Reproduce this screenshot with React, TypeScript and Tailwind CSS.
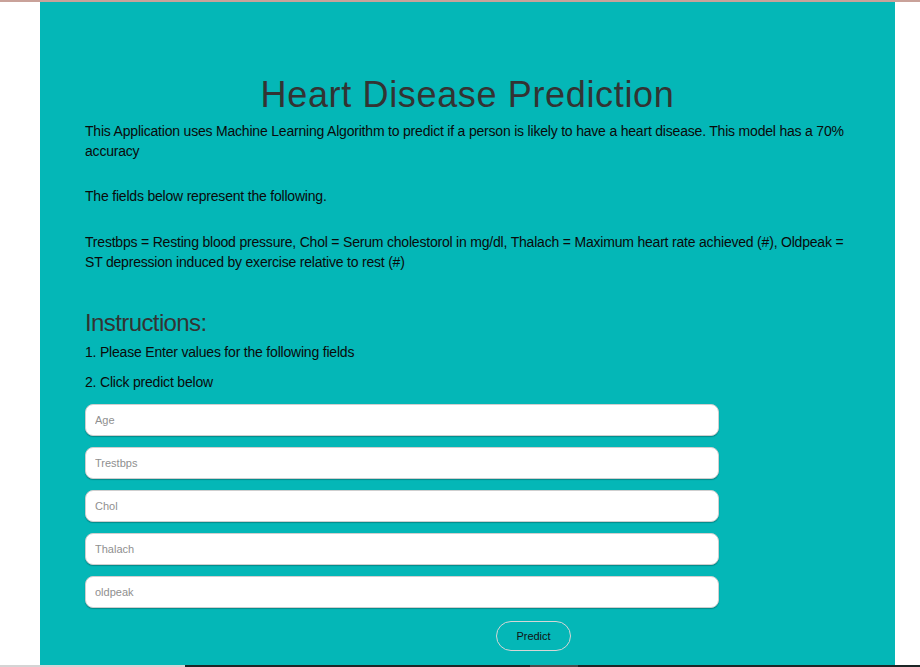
import React from "react";

const fields = ["Age", "Trestbps", "Chol", "Thalach", "oldpeak"];

export default function App() {
  return (
    <div
      className="flex h-[667px] w-[920px] flex-col overflow-hidden bg-white"
      style={{ fontFamily: '"Liberation Sans", Arial, sans-serif' }}
    >
      <div className="h-[2px] shrink-0 bg-[#c9a29a]" />
      <div className="flex min-h-0 flex-1">
        <div className="ml-[40px] w-[855px] bg-[#04b7b7] px-[45px] pt-[73px]">
          <h1 className="text-center text-[36px] leading-[40px] tracking-[0.65px] text-[#333333]">
            Heart Disease Prediction
          </h1>
          <p className="mt-[6px] text-[14px] leading-[20px] tracking-[-0.2px] text-[#0a0a0a]">
            This Application uses Machine Learning Algorithm to predict if a person is likely to have a heart disease. This model has a 70% accuracy
          </p>
          <p className="mt-[25px] text-[14px] leading-[20px] tracking-[-0.2px] text-[#0a0a0a]">
            The fields below represent the following.
          </p>
          <p className="mt-[26px] text-[14px] leading-[20px] tracking-[-0.2px] text-[#0a0a0a]">
            Trestbps = Resting blood pressure, Chol = Serum cholestorol in mg/dl, Thalach = Maximum heart rate achieved (#), Oldpeak = ST depression induced by exercise relative to rest (#)
          </p>
          <h3 className="mt-[38px] text-[24px] leading-[26px] tracking-[-0.6px] text-[#333333]">
            Instructions:
          </h3>
          <p className="mt-[6px] text-[14px] leading-[20px] tracking-[-0.2px] text-[#0a0a0a]">
            1. Please Enter values for the following fields
          </p>
          <p className="mt-[10px] text-[14px] leading-[20px] tracking-[-0.2px] text-[#0a0a0a]">
            2. Click predict below
          </p>
          <form className="mt-[12px] flex w-[634px] flex-col gap-[11px]">
            {fields.map((f) => (
              <input
                key={f}
                type="text"
                placeholder={f}
                className="h-[32px] w-full rounded-[8px] border border-[#cfcfcf] bg-white px-[9px] text-[11px] text-[#333] shadow-[0_1px_1px_rgba(0,0,0,0.25)] outline-none placeholder:text-[#8f8f8f]"
              />
            ))}
            <div className="mt-[2px] flex">
              <button
                type="button"
                className="ml-[411px] h-[30px] w-[75px] rounded-full border border-[#d6d6d6] bg-transparent text-[11px] text-[#111]"
              >
                Predict
              </button>
            </div>
          </form>
        </div>
      </div>
      <div className="flex h-[2px] shrink-0">
        <div className="w-[185px] bg-[#d4d4d4]" />
        <div className="flex flex-1 bg-[#1c2626]">
          <div className="ml-[345px] w-[48px] bg-[#4a4a4a]" />
        </div>
      </div>
    </div>
  );
}
